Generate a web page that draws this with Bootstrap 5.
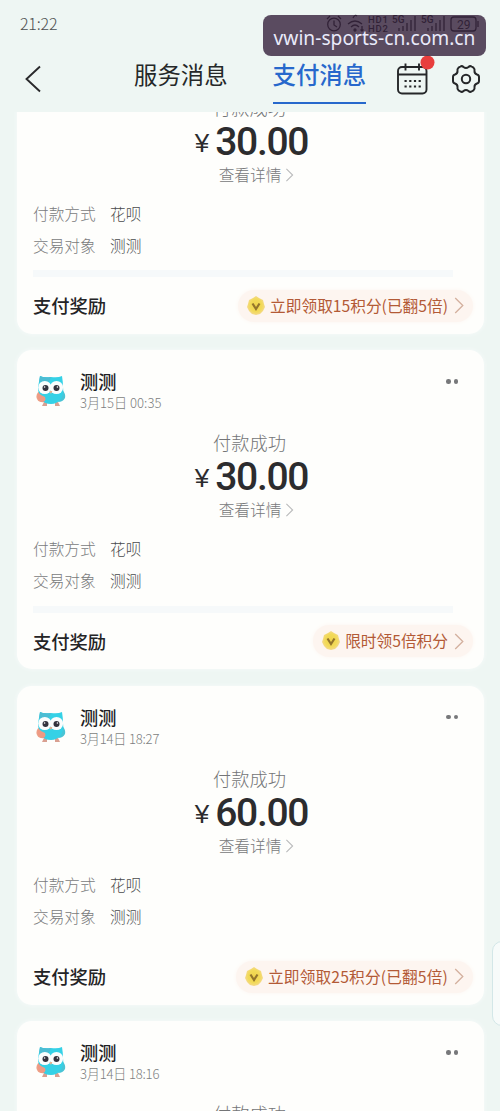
<!DOCTYPE html>
<html lang="zh-CN">
<head>
<meta charset="utf-8">
<meta name="viewport" content="width=device-width, initial-scale=1">
<title>支付消息</title>
<link href="https://cdn.jsdelivr.net/npm/bootstrap@5.3.0/dist/css/bootstrap.min.css" rel="stylesheet">
<style>
body{font-family:"Noto Sans CJK SC","Noto Sans",sans-serif;background:#eef6f3;color:#29292b}
.screen{height:1111px}
.status{height:46px;padding:0 16px 0 20px}
.clock{font:300 16px/46px "Noto Sans CJK SC",sans-serif;color:#4c4f50;letter-spacing:-.2px}
.status-icons{width:160px;height:20px;margin-top:1px}
.site-tag{top:15px;left:263px;width:223px;height:41px;border-radius:8px;background:rgba(53,32,59,.8);color:#e9eafa;font:19.2px/45px "Noto Sans",sans-serif;z-index:5}
.topbar{height:66px;padding:0 18px 0 23px}
.tab-link{font-size:23.4px;line-height:56px;height:58px;color:#252829;white-space:nowrap}
.tab-on{color:#2768cc;font-weight:500;border-bottom:2.5px solid #2768cc}
.feed{padding:0 16px 0 17px}
.feed-in{margin-top:-97.5px;gap:16.5px}
.msg{height:319px;flex:none;background:#fefefc;border-radius:15px;padding:0 16px;box-shadow:0 0 4px #f8fbfb}
.head{height:74px;padding-top:20px}
.avatar{width:32px;height:34px;margin:4px 13px 0 2px}
.who{font-size:18.2px;font-weight:500;line-height:22px;color:#202124}
.when{font-size:13.1px;font-weight:300;line-height:21px;color:#7d7e80}
.dots{margin:9px 10px 0 0;gap:3px}
.dots i{width:4.5px;height:4.5px;border-radius:50%;background:#77787a}
.state{font-size:18.2px;font-weight:300;line-height:37px;height:38px;color:#747577;padding-right:2px}
.sum{height:30px;line-height:30px;color:#2c2c2e;padding-left:2px}
.yen{font:400 26px/33px "Liberation Sans",sans-serif;margin-right:6px}
.num{font:500 39px/30px Roboto,sans-serif;letter-spacing:-1.3px}
.more{font-size:15.7px;font-weight:300;line-height:36px;color:#77787a;padding-left:12px}
.pair{font-size:15.7px;line-height:32.4px;font-weight:300;padding-top:5px}
.pair dt{width:77px;font-weight:300;color:#7a7b7d}
.pair dd{color:#4a4b4d}
.band{height:7px;background:#f6f9fa;margin-top:8px;margin-right:15px}
.foot-row{height:54px;padding-top:3px}
.prize{font-size:18.3px;font-weight:500;color:#242426}
.chip{height:32px;border-radius:16px;background:#fdf5f0;padding:0 9px 0 8px;margin-right:-5px;font-size:15.7px;line-height:30px;color:#b35a36;box-shadow:0 0 4px #fdf6f1}
.side-tab{right:-12px;top:941px;width:20px;height:85px;border:1.5px solid #d3e7e8;border-radius:10px;background:#f7fbfa}
</style>
</head>
<body>
<svg width="0" height="0" class="position-absolute" aria-hidden="true">
  <defs>
    <radialGradient id="gold"><stop offset="0" stop-color="#efd34c"/><stop offset=".65" stop-color="#f2da58"/><stop offset="1" stop-color="#f4d98a"/></radialGradient>
  </defs>
  <symbol id="owl" viewBox="0 0 32 34">
    <path d="M9 28l-2 4h5v-4zM20 28v4h5l-2-4z" fill="#d9a091"/>
    <path d="M5 17Q0 20 2 25Q4 29 10 28z" fill="#eda288"/>
    <path d="M27 15Q31 20 30 24Q28 28 23 28z" fill="#49c4d5"/>
    <path d="M5 2Q9 4 16 3Q23 4 27 2Q28 8 28 13Q29 20 26 25Q22 30 16 30Q9 30 6 25Q3 20 3 13Q4 8 5 2z" fill="#35d1e6"/>
    <path d="M5 2Q9 4 16 3L14 8L4 8z" fill="#4cbdd3"/>
    <circle cx="9.800" cy="13.500" r="6.600" fill="#fbfdfd"/><circle cx="21.500" cy="13.500" r="6.600" fill="#fbfdfd"/>
    <circle cx="10.500" cy="14" r="3" fill="#33323d"/><circle cx="21.500" cy="14" r="3" fill="#33323d"/>
    <circle cx="9.600" cy="13" r=".8" fill="#fff"/><circle cx="22.400" cy="13" r=".8" fill="#fff"/>
    <path d="M14.300 17h3L16 20z" fill="#f1b18e"/>
    <path d="M3 18Q5 21 10 23Q12 28 6 28Q1 25 3 18z" fill="#ee9a84"/>
  </symbol>
  <symbol id="coin" viewBox="0 0 20 22">
    <path d="M10 1l3 2 4 2 1 4 1 3-2 4-3 3-4 1-4-1-3-3-2-4 1-3 1-4 4-2z" fill="url(#gold)"/>
    <path d="M6.500 8.500L10 14l3.500-5.500" fill="none" stroke="#94752b" stroke-width="2.200"/>
  </symbol>
  <symbol id="arrow" viewBox="0 0 10 18"><path d="M1 1l8 8-8 8" fill="none" stroke="currentColor" stroke-width="1.400"/></symbol>
</svg>

<div class="screen position-relative overflow-hidden d-flex flex-column">
  <div class="status d-flex align-items-center justify-content-between flex-shrink-0">
    <span class="clock">21:22</span>
    <svg class="status-icons" viewBox="0 0 160 20" fill="none" stroke="#27272a" stroke-width="1.300" font-family="Roboto,sans-serif">
      <circle cx="10" cy="10.500" r="6.300"/><path d="M10 6.500v4.500l3 2M3 5l3-3M14 2l3 3"/>
      <path d="M24 10q7-6 14 0M27 13q4-4 8 0"/><circle cx="31" cy="16" r="1"/><path d="M38 12v5m-1.500-1.500L38 17l1.500-1.500M29 4q2-4 4-2"/>
      <g fill="#27272a" stroke="none" font-size="9.500" font-weight="500"><text x="44" y="8.500" textLength="20">HD1</text><text x="44" y="18" textLength="20">HD2</text><text x="68" y="8.500" font-size="10">5G</text><text x="97" y="8.500" font-size="10">5G</text></g>
      <path d="M75 17v-3M79 17v-5M83 17v-8M87 17V6M91 17V2M104 17v-3M108 17v-5M112 17v-8M116 17V6M120 17V2"/>
      <rect x="127" y="3" width="25" height="14" rx="3"/><path d="M154 7v6"/><text x="133" y="14.500" font-size="12" fill="#27272a" stroke="none">29</text>
    </svg>
  </div>
  <div class="site-tag position-absolute text-center text-nowrap">vwin-sports-cn.com.cn</div>

  <nav class="topbar d-flex align-items-start flex-shrink-0">
    <svg width="20" height="28" viewBox="0 0 20 28" style="margin-top:19px" fill="none" stroke="#29292b" stroke-width="1.900"><path d="M17 1.500L3.500 14 17 26.500"/></svg>
    <span class="tab-link" style="margin-left:91px">服务消息</span>
    <span class="tab-link tab-on" style="margin-left:45px">支付消息</span>
    <svg class="ms-auto" width="42" height="44" viewBox="0 0 42 44" style="margin-top:7px" fill="none" stroke="#252729" stroke-width="1.900">
      <rect x="5" y="14" width="28.500" height="26.500" rx="4"/><path d="M5 21.500h28.500M12.500 10.500v7M26 10.500v7"/>
      <path d="M11.500 28h17M11.500 33.500h17" stroke-width="2.200" stroke-dasharray="2.200 2.500"/>
      <circle cx="34.500" cy="9.500" r="7" fill="#e83e3d" stroke="none"/>
    </svg>
    <svg width="30" height="30" viewBox="0 0 30 30" style="margin:18px 1px 0 16px" fill="none" stroke="#252729" stroke-width="2">
      <path stroke-linejoin="round" d="M9.500 2.500Q11 1.500 12.500 3Q15 5 17.500 3Q19 1.500 20.500 2.500L22.500 3.700Q24 5 23.500 7Q23.300 9.500 26 10.500Q28 11 28 13V17Q28 19 26 19.500Q23.300 20.500 23.500 23Q24 25 22.500 26.300L20.500 27.500Q19 28.500 17.500 27Q15 25 12.500 27Q11 28.500 9.500 27.500L7.500 26.300Q6 25 6.500 23Q6.700 20.500 4 19.500Q2 19 2 17V13Q2 11 4 10.500Q6.700 9.500 6.500 7Q6 5 7.500 3.700z"/><circle cx="15" cy="15" r="4.200"/>
    </svg>
  </nav>

  <main class="feed flex-grow-1 overflow-hidden">
    <div class="feed-in d-flex flex-column">
      <article class="msg">
        <div class="head"></div>
        <div class="state text-center">付款成功</div>
        <div class="sum d-flex justify-content-center"><span class="yen">¥</span><span class="num">30.00</span></div>
        <div class="more d-flex justify-content-center align-items-center">查看详情<svg width="9" height="14" class="ms-1" style="color:#b9babb"><use href="#arrow"/></svg></div>
        <dl class="pair mb-0"><div class="d-flex"><dt>付款方式</dt><dd class="mb-0">花呗</dd></div><div class="d-flex"><dt>交易对象</dt><dd class="mb-0">测测</dd></div></dl>
        <div class="band"></div>
        <div class="foot-row d-flex align-items-center justify-content-between"><span class="prize">支付奖励</span><span class="chip d-flex align-items-center"><svg width="20" height="22" class="me-1"><use href="#coin"/></svg><span class="chip-text">立即领取15积分(已翻5倍)</span><svg width="10" height="17" style="margin-left:6px;color:#d3b09e"><use href="#arrow"/></svg></span></div>
      </article>

      <article class="msg">
        <div class="head d-flex"><svg class="avatar"><use href="#owl"/></svg><div><div class="who">测测</div><div class="when">3月15日 00:35</div></div><div class="dots d-flex ms-auto"><i></i><i></i></div></div>
        <div class="state text-center">付款成功</div>
        <div class="sum d-flex justify-content-center"><span class="yen">¥</span><span class="num">30.00</span></div>
        <div class="more d-flex justify-content-center align-items-center">查看详情<svg width="9" height="14" class="ms-1" style="color:#b9babb"><use href="#arrow"/></svg></div>
        <dl class="pair mb-0"><div class="d-flex"><dt>付款方式</dt><dd class="mb-0">花呗</dd></div><div class="d-flex"><dt>交易对象</dt><dd class="mb-0">测测</dd></div></dl>
        <div class="band"></div>
        <div class="foot-row d-flex align-items-center justify-content-between"><span class="prize">支付奖励</span><span class="chip d-flex align-items-center"><svg width="20" height="22" class="me-1"><use href="#coin"/></svg><span class="chip-text">限时领5倍积分</span><svg width="10" height="17" style="margin-left:6px;color:#d3b09e"><use href="#arrow"/></svg></span></div>
      </article>

      <article class="msg">
        <div class="head d-flex"><svg class="avatar"><use href="#owl"/></svg><div><div class="who">测测</div><div class="when" style="letter-spacing:-.2px">3月14日 18:27</div></div><div class="dots d-flex ms-auto"><i></i><i></i></div></div>
        <div class="state text-center">付款成功</div>
        <div class="sum d-flex justify-content-center"><span class="yen">¥</span><span class="num">60.00</span></div>
        <div class="more d-flex justify-content-center align-items-center">查看详情<svg width="9" height="14" class="ms-1" style="color:#b9babb"><use href="#arrow"/></svg></div>
        <dl class="pair mb-0"><div class="d-flex"><dt>付款方式</dt><dd class="mb-0">花呗</dd></div><div class="d-flex"><dt>交易对象</dt><dd class="mb-0">测测</dd></div></dl>
        <div class="band invisible"></div>
        <div class="foot-row d-flex align-items-center justify-content-between"><span class="prize">支付奖励</span><span class="chip d-flex align-items-center"><svg width="20" height="22" class="me-1"><use href="#coin"/></svg><span class="chip-text" style="letter-spacing:.15px">立即领取25积分(已翻5倍)</span><svg width="10" height="17" style="margin-left:6px;color:#d3b09e"><use href="#arrow"/></svg></span></div>
      </article>

      <article class="msg">
        <div class="head d-flex"><svg class="avatar"><use href="#owl"/></svg><div><div class="who">测测</div><div class="when" style="letter-spacing:-.2px">3月14日 18:16</div></div><div class="dots d-flex ms-auto"><i></i><i></i></div></div>
        <div class="state text-center">付款成功</div>
      </article>
    </div>
  </main>
  <div class="side-tab position-absolute"></div>
</div>
<script src="https://cdn.jsdelivr.net/npm/bootstrap@5.3.0/dist/js/bootstrap.bundle.min.js"></script>
</body>
</html>
